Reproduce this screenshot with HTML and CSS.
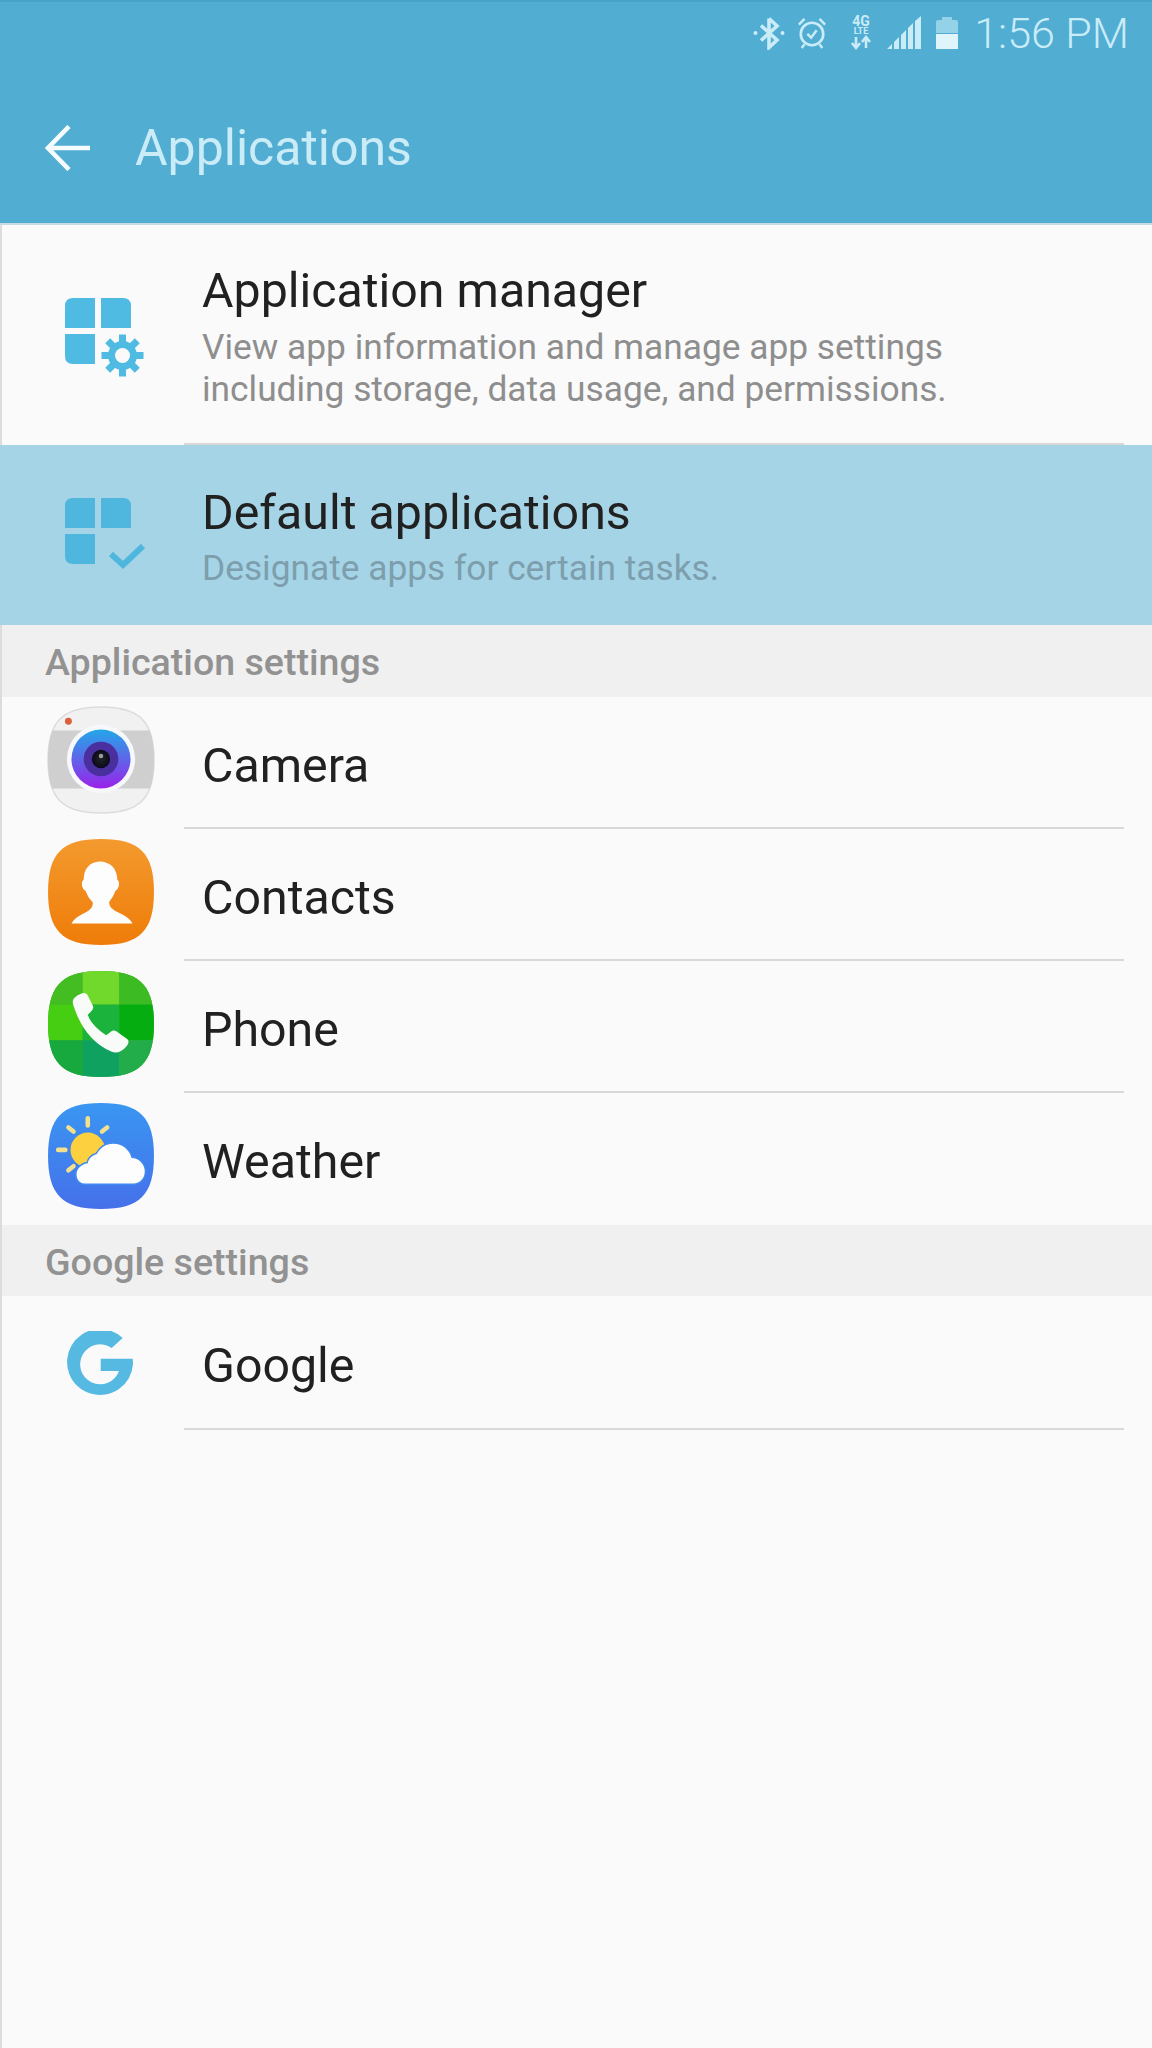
FILE: index.html
```html
<!DOCTYPE html>
<html lang="en">
<head>
<meta charset="utf-8">
<title>Applications</title>
<link rel="stylesheet" href="styles.css">
</head>
<body>
<div class="screen">
  <header class="appbar">
    <div class="status">
      <svg class="si" width="32" height="34" viewBox="0 0 32 34"><path d="M16 2.500 V31.500 L24 24 L8 9.500 M16 2.500 L24 10 L8 24.500" fill="none" stroke="#c9ecf7" stroke-width="3.6"/><circle cx="2.500" cy="17" r="2" fill="#c9ecf7"/><circle cx="29.500" cy="17" r="2" fill="#c9ecf7"/></svg>
      <svg class="si alarm" width="30" height="34" viewBox="0 0 32 34"><circle cx="16" cy="18" r="12" fill="none" stroke="#c9ecf7" stroke-width="2.8"/><path d="M11 18 L15 22 L21 14" fill="none" stroke="#c9ecf7" stroke-width="2.6"/><path d="M2 8 L8 2 M24 2 L30 8 M8 29 L5 33 M24 29 L27 33" fill="none" stroke="#c9ecf7" stroke-width="2.6"/></svg>
      <svg class="si net" width="22" height="50" viewBox="0 -8 22 50"><text x="11" y="10" class="n4g">4G</text><text x="11" y="18" class="nlte">LTE</text><path d="M6 21 V32 M2 27 L6 32 L10 27 M16 32 V21 M12 26 L16 21 L20 26" fill="none" stroke="#c9ecf7" stroke-width="2.600"/></svg>
      <svg class="si signal" width="35" height="34" viewBox="0 0 35 34"><path d="M0 33 L5 28 V33 Z M7 33 V26 L12 21 V33 Z M14 33 V19 L19 14 V33 Z M21 33 V12 L26 7 V33 Z M28 33 V5 L34 0 V33 Z" fill="#c9ecf7"/></svg>
      <svg class="si batt" width="24" height="34" viewBox="0 0 24 34"><path d="M7 1 H17 V4 H21 Q23 4 23 6 V17 H1 V6 Q1 4 3 4 H7 Z" fill="#94d2e8"/><path d="M1 18 H23 V33 H1 Z" fill="#dff5fb"/></svg>
      <span class="clock">1:56 PM</span>
    </div>
    <div class="titlebar">
      <svg class="back" width="46" height="46" viewBox="0 0 46 46"><path d="M3 23 H45 M24 1.500 L3 23 L24 44.500" fill="none" stroke="#f4fbfd" stroke-width="4.6"/></svg>
      <h1 class="title">Applications</h1>
    </div>
  </header>

  <main class="content">
    <section class="row row-manager">
      <div class="lead">
        <svg width="82" height="80" viewBox="0 0 82 80">
          <path d="M1 9 Q1 1 9 1 H31 V31 H1 Z M37 1 H59 Q67 1 67 9 V31 H37 Z M1 37 H31 V67 H9 Q1 67 1 59 Z" fill="#4fbbe3"/>
          <circle cx="58.500" cy="58.500" r="17" fill="#fafafa"/>
          <circle cx="58.500" cy="58.500" r="14.500" fill="#4fbbe3"/>
          <path d="M58.500 37.500 V79.500 M37.500 58.500 H79.500 M43.700 43.700 L73.300 73.300 M73.300 43.700 L43.700 73.300" stroke="#4fbbe3" stroke-width="7"/>
          <circle cx="58.500" cy="58.500" r="7.500" fill="#fafafa"/>
        </svg>
      </div>
      <div class="body body-rule">
        <div class="name">Application manager</div>
        <div class="desc">View app information and manage app settings<br>including storage, data usage, and permissions.</div>
      </div>
    </section>

    <section class="row row-selected">
      <div class="lead">
        <svg width="82" height="80" viewBox="0 0 82 80">
          <path d="M1 9 Q1 1 9 1 H31 V31 H1 Z M37 1 H59 Q67 1 67 9 V31 H37 Z M1 37 H31 V67 H9 Q1 67 1 59 Z" fill="#4fb6de"/>
          <path d="M47 57 L59 68 L79 49" fill="none" stroke="#4fb6de" stroke-width="6"/>
        </svg>
      </div>
      <div class="body">
        <div class="name">Default applications</div>
        <div class="desc desc-sel">Designate apps for certain tasks.</div>
      </div>
    </section>

    <div class="section-head head-apps">Application settings</div>

    <section class="row app">
      <div class="lead">
        <svg width="110" height="110" viewBox="0 0 108 108">
          <defs>
            <linearGradient id="lens" x1="0" y1="0" x2="0" y2="1"><stop offset="0" stop-color="#22a8e8"/><stop offset="1" stop-color="#9a22ea"/></linearGradient>
            <radialGradient id="pupil"><stop offset="0" stop-color="#222"/><stop offset="1" stop-color="#0a0a1e"/></radialGradient>
            <clipPath id="cam"><path d="M54 2 C92 2 106 16 106 54 C106 92 92 106 54 106 C16 106 2 92 2 54 C2 16 16 2 54 2 Z"/></clipPath>
          </defs>
          <path d="M54 2 C92 2 106 16 106 54 C106 92 92 106 54 106 C16 106 2 92 2 54 C2 16 16 2 54 2 Z" fill="#f1f1f1" stroke="#dcdcdc" stroke-width="1.5"/>
          <rect x="0" y="25" width="108" height="57" fill="#cfcfcf" clip-path="url(#cam)"/>
          <circle cx="22" cy="16" r="3.400" fill="#d9603a"/>
          <circle cx="54" cy="53" r="33.500" fill="#f7f8fb"/>
          <circle cx="54" cy="53" r="29" fill="url(#lens)"/>
          <circle cx="54" cy="53" r="17" fill="#4a2f9e"/>
          <circle cx="54" cy="53" r="9" fill="url(#pupil)"/>
          <circle cx="54" cy="50" r="2.200" fill="#9a9a9a"/>
        </svg>
      </div>
      <div class="body body-rule"><div class="name">Camera</div></div>
    </section>

    <section class="row app">
      <div class="lead">
        <svg width="110" height="110" viewBox="0 0 108 108">
          <defs><linearGradient id="org" x1="0" y1="0" x2="0" y2="1"><stop offset="0" stop-color="#f39a2e"/><stop offset="1" stop-color="#ef7c09"/></linearGradient></defs>
          <path d="M54 2 C92 2 106 16 106 54 C106 92 92 106 54 106 C16 106 2 92 2 54 C2 16 16 2 54 2 Z" fill="url(#org)"/>
          <path d="M52 24 C64 24 70 32 70 42 C73 44 72 51 68 53 C66 59 63 62 62 64 C62 70 67 72 75 76 C79 78 83 81 85 85 H25 C27 81 31 78 35 76 C43 72 46 70 46 64 C44 62 41 59 39 53 C35 51 34 44 37 42 C37 32 42 25 52 24 Z" fill="#fdfdfd"/>
        </svg>
      </div>
      <div class="body body-rule"><div class="name">Contacts</div></div>
    </section>

    <section class="row app">
      <div class="lead">
        <svg width="110" height="110" viewBox="0 0 108 108">
          <defs><clipPath id="sq"><path d="M54 2 C92 2 106 16 106 54 C106 92 92 106 54 106 C16 106 2 92 2 54 C2 16 16 2 54 2 Z"/></clipPath></defs>
          <g clip-path="url(#sq)">
            <rect x="0" y="0" width="108" height="108" fill="#36b52e"/>
            <rect x="0" y="0" width="36" height="35" fill="#43bd22"/>
            <rect x="36" y="0" width="36" height="35" fill="#70d92c"/>
            <rect x="72" y="0" width="36" height="35" fill="#3cbb23"/>
            <rect x="0" y="35" width="36" height="35" fill="#46ce12"/>
            <rect x="36" y="35" width="36" height="35" fill="#1bb33c"/>
            <rect x="72" y="35" width="36" height="35" fill="#05ad10"/>
            <rect x="0" y="70" width="36" height="38" fill="#17a83e"/>
            <rect x="36" y="70" width="36" height="38" fill="#0ea160"/>
            <rect x="72" y="70" width="36" height="38" fill="#23ad4a"/>
          </g>
          <path d="M27 36 C25 31 27 27 35 24 C38 23 40 24 41 26 L46 36 C47 38 46 40 44 42 L41 45 C44 53 50 59 59 65 L63 62 C65 60 67 60 69 61 L80 69 C82 71 81 74 78 77 C73 82 69 83 64 81 C46 73 34 58 27 36 Z" fill="#f8fbf7"/>
        </svg>
      </div>
      <div class="body body-rule"><div class="name">Phone</div></div>
    </section>

    <section class="row app app-last">
      <div class="lead">
        <svg width="110" height="110" viewBox="0 0 108 108">
          <defs><linearGradient id="sky" x1="0" y1="0" x2="0" y2="1"><stop offset="0" stop-color="#3a96f2"/><stop offset="1" stop-color="#4570ea"/></linearGradient></defs>
          <path d="M54 2 C92 2 106 16 106 54 C106 92 92 106 54 106 C16 106 2 92 2 54 C2 16 16 2 54 2 Z" fill="url(#sky)"/>
          <circle cx="41" cy="48" r="17" fill="#fcd03e"/>
          <path d="M41 17 V24 M22 26 L27 30 M60 26 L55 30 M12 48 H19 M22 68 L27 64" stroke="#f3e08e" stroke-width="4.500" stroke-linecap="round"/>
          <path d="M38 81 C32 81 30 76 30 72 C30 66 35 62 41 61 C42 56 46 53 50 52 C53 46 59 42 66 42 C75 42 82 48 84 56 C91 56 97 62 97 69 C97 76 92 81 86 81 Z" fill="#fdfdfd" stroke="#3f8bef" stroke-width="3" paint-order="stroke"/>
        </svg>
      </div>
      <div class="body"><div class="name">Weather</div></div>
    </section>

    <div class="section-head">Google settings</div>

    <section class="row google">
      <div class="lead">
        <svg width="66" height="66" viewBox="0 0 66 66"><path d="M55.700 7 A33 33 0 1 0 66 33 Q66 30 65.700 27.700 H33.700 V40 H52 A20 20 0 1 1 44.700 17 Z" fill="#55b9e2"/></svg>
      </div>
      <div class="body body-rule"><div class="name">Google</div></div>
    </section>
  </main>
</div>
</body>
</html>
```
FILE: styles.css
```css
* { box-sizing: border-box; }
html, body { margin: 0; padding: 0; }
body { width: 1152px; height: 2048px; overflow: hidden; background: #fafafa; font-family: Roboto, "Liberation Sans", sans-serif; }
.screen { width: 1152px; height: 2048px; display: flex; flex-direction: column; border-left: 2px solid #dcdcdc; background: #fafafa; }

.appbar { height: 225px; margin-left: -2px; background: #52add3; border-top: 2px solid #49a2c9; border-bottom: 2px solid #c8dbe3; flex: none; }
.status { height: 62px; display: flex; align-items: center; justify-content: flex-end; padding-right: 23px; }
.si { flex: none; display: block; }
.alarm { margin-left: 12px; }
.net { margin-left: 23px; }
.signal { margin-left: 15px; }
.batt { margin-left: 13px; }
.clock { margin-left: 15px; font-size: 43px; font-weight: 300; color: #c9ecf7; line-height: 1; white-space: nowrap; }
.n4g { font: 700 14px Roboto, sans-serif; fill: #c9ecf7; text-anchor: middle; }
.nlte { font: 700 9px Roboto, sans-serif; fill: #c9ecf7; text-anchor: middle; }

.titlebar { height: 159px; display: flex; align-items: center; padding-left: 45px; padding-top: 8px; }
.back { flex: none; display: block; }
.title { margin: 0 0 0 44px; font-size: 50px; font-weight: 400; color: #c9ecf7; line-height: 1; }

.content { flex: 1; display: flex; flex-direction: column; }
.row { display: flex; flex: none; }
.lead { width: 182px; flex: none; display: flex; align-items: center; justify-content: flex-start; }
.body { flex: 1; display: flex; flex-direction: column; justify-content: center; padding-left: 18px; margin-right: 28px; padding-top: 5px; }
.body-rule { border-bottom: 2px solid #d8d8d8; }

.row-manager { height: 220px; }
.row-manager .lead { padding-left: 62px; padding-top: 4px; }
.row-selected { height: 180px; margin-left: -2px; background: #a5d4e7; }
.row-selected .lead { width: 184px; padding-left: 64px; padding-top: 4px; }
.row-selected .body { padding-top: 3px; }

.name { font-size: 48.3px; line-height: 56px; color: #212121; white-space: nowrap; }
.desc { font-size: 35.3px; line-height: 42px; color: #8e8e8e; white-space: nowrap; margin-top: 7px; }
.desc-sel { color: #7d9eac; margin-top: 6px; }

.section-head { flex: none; height: 71px; background: #f0f0f0; padding-left: 43px; padding-top: 3px; font-size: 37.6px; font-weight: 500; color: #929292; display: flex; align-items: center; }
.head-apps { height: 72px; padding-top: 1px; }

.app { height: 132px; }
.app .lead { padding-left: 44px; padding-bottom: 6px; }
.app .body { padding-top: 7px; }
.app-last .body { padding-top: 5px; }
.google { height: 134px; }
.google .lead { padding-left: 65px; padding-top: 2px; }
.google .body { padding-top: 8px; }
```
